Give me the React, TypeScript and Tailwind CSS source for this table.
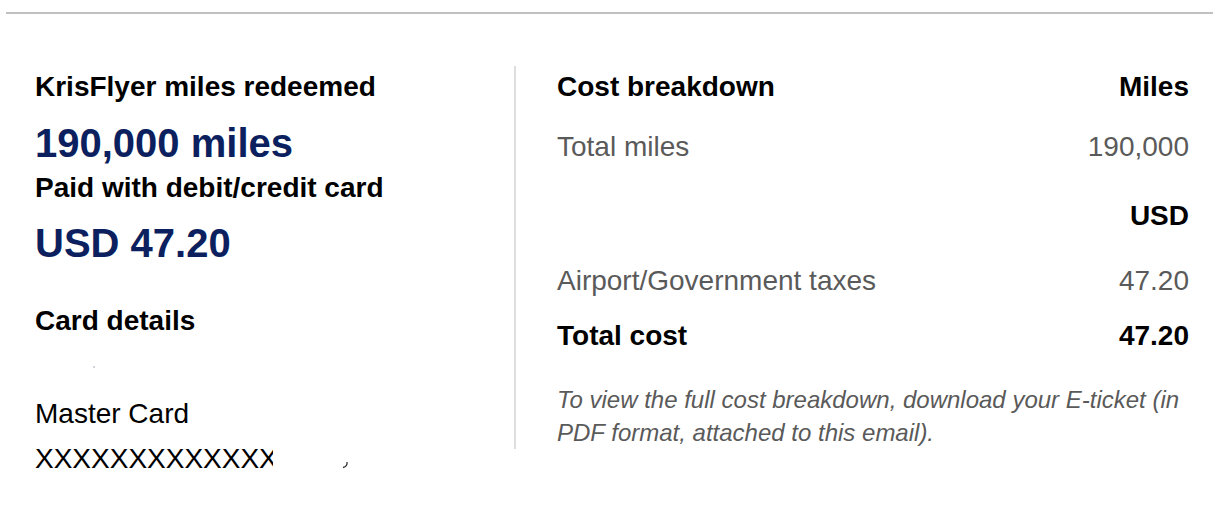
const navy = 'text-[#0c1f5e]'

const LeftColumn = () => (
  <div className="w-[479px] shrink-0 pt-[5px]">
    <p className="text-[28px] leading-[32px] font-bold text-black">KrisFlyer miles redeemed</p>
    <p className={`mt-[17px] text-[40px] leading-[46px] font-bold ${navy}`}>190,000 miles</p>
    <p className="mt-[6px] text-[28px] leading-[32px] font-bold text-black">Paid with debit/credit card</p>
    <p className={`mt-[16px] text-[40px] leading-[46px] font-bold ${navy}`}>USD 47.20</p>
    <p className="mt-[39px] text-[28px] leading-[32px] font-bold text-black">Card details</p>
    <div className="mt-[29px] ml-[58px] w-[2px] h-[2px] bg-gray-300" />
    <p className="mt-[30px] text-[28px] leading-[32px] text-black">Master Card</p>
    <div className="mt-[13px] flex items-center">
      <div className="w-[238px] overflow-hidden whitespace-nowrap text-[28px] leading-[32px] text-black">
        XXXXXXXXXXXXXXXX
      </div>
      <svg className="ml-[68px] mt-[12px]" width="8" height="8" viewBox="0 0 8 8">
        <path d="M6 1 C6.5 4 5 6 2 6.5" stroke="#333" strokeWidth="1.3" fill="none" />
      </svg>
    </div>
  </div>
)

const Row = ({ label, value, bold, className }: { label: string; value: string; bold?: boolean; className?: string }) => (
  <div
    className={`flex justify-between text-[28px] leading-[32px] ${
      bold ? 'font-bold text-black' : 'text-[#5a5a5a]'
    } ${className ?? ''}`}
  >
    <span>{label}</span>
    <span>{value}</span>
  </div>
)

const RightColumn = () => (
  <div className="flex-1 border-l-2 border-[#dedede] pl-[41px] pr-[27px] pt-[5px] pb-0">
    <Row label="Cost breakdown" value="Miles" bold />
    <Row label="Total miles" value="190,000" className="mt-[28px]" />
    <Row label="" value="USD" bold className="mt-[37px]" />
    <Row label="Airport/Government taxes" value="47.20" className="mt-[33px]" />
    <Row label="Total cost" value="47.20" bold className="mt-[23px]" />
    <p className="mt-[31px] pr-[8px] text-[24px] leading-[33px] italic text-[#5a5a5a]">
      To view the full cost breakdown, download your E-ticket (in PDF format, attached to this email).
    </p>
  </div>
)

export default function App() {
  return (
    <div className="w-[1216px] h-[506px] bg-white font-['Liberation_Sans',Arial,sans-serif] pt-[12px]">
      <div className="ml-[6px] mr-[3px] h-[2px] bg-[#c0c0c0]" />
      <div className="mt-[52px] flex items-start pl-[35px]">
        <LeftColumn />
        <RightColumn />
      </div>
    </div>
  )
}
